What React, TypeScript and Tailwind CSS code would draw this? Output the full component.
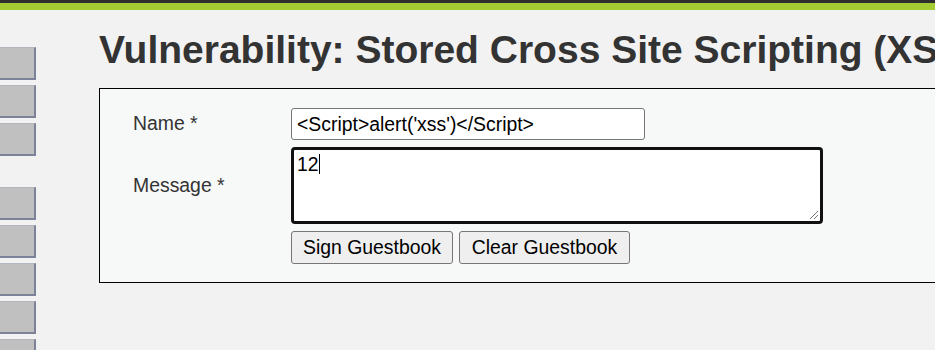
const menuGroups = [3, 5];

const font = "font-['Liberation_Sans',Arial,sans-serif]";

function MenuButton() {
  return (
    <div className="h-[33px] w-[36px] bg-[#c0c0c0] border-t border-t-[#b4b6be] border-r-2 border-r-[#7c8299] border-b-2 border-b-[#7c8299]" />
  );
}

export default function App() {
  return (
    <div className={`h-[350px] w-[935px] overflow-hidden bg-[#f2f2f2] text-[#333] ${font}`}>
      <div className="h-[3px] bg-[#2e2e2e]" />
      <div className="h-[7px] bg-[#a2cc32]" />

      <div className="flex">
        <div className="flex w-[36px] shrink-0 flex-col gap-[31px] pt-[37px]">
          {menuGroups.map((count, g) => (
            <div key={g} className="flex flex-col gap-[5px]">
              {Array.from({ length: count }).map((_, i) => (
                <MenuButton key={i} />
              ))}
            </div>
          ))}
        </div>

        <div className="ml-[63px] shrink-0">
          <h1 className="mt-[20px] whitespace-nowrap text-[39px] font-bold leading-none text-[#333]">
            Vulnerability: Stored Cross Site Scripting (XSS)
          </h1>

          <div className="mt-[19px] w-[900px] border border-black bg-[#f7f8f8] pl-[33px] pt-[19px] pb-[18px]">
            <div className="grid grid-cols-[158px_auto] items-center gap-y-[7px] text-[19.4px]">
              <label className="text-[#333]">Name *</label>
              <input
                readOnly
                value="<Script>alert('xss')</Script>"
                className="h-[32px] w-[354px] rounded-[3px] border border-[#767676] bg-white px-[5px] text-[19.4px] text-black outline-none"
              />

              <label className="text-[#333]">Message *</label>
              <div className="relative h-[77px] w-[532px] rounded-[4px] border-[3px] border-[#111] bg-white px-[3px] pt-[1px] text-[19.4px] leading-[24px] text-black">
                12<span className="inline-block h-[20px] w-px translate-y-[3px] bg-black" />
                <svg className="absolute right-[1px] bottom-[1px]" width="10" height="10" viewBox="0 0 10 10">
                  <path d="M1 9 L9 1 M5 9 L9 5" stroke="#777" strokeWidth="1" />
                </svg>
              </div>

              <div />
              <div className="flex gap-[6px]">
                <button className="h-[33px] w-[162px] rounded-[3px] border border-[#767676] bg-[#efefef] text-[19.4px] text-black">
                  Sign Guestbook
                </button>
                <button className="h-[33px] w-[171px] rounded-[3px] border border-[#767676] bg-[#efefef] text-[19.4px] text-black">
                  Clear Guestbook
                </button>
              </div>
            </div>
          </div>
        </div>
      </div>
    </div>
  );
}
